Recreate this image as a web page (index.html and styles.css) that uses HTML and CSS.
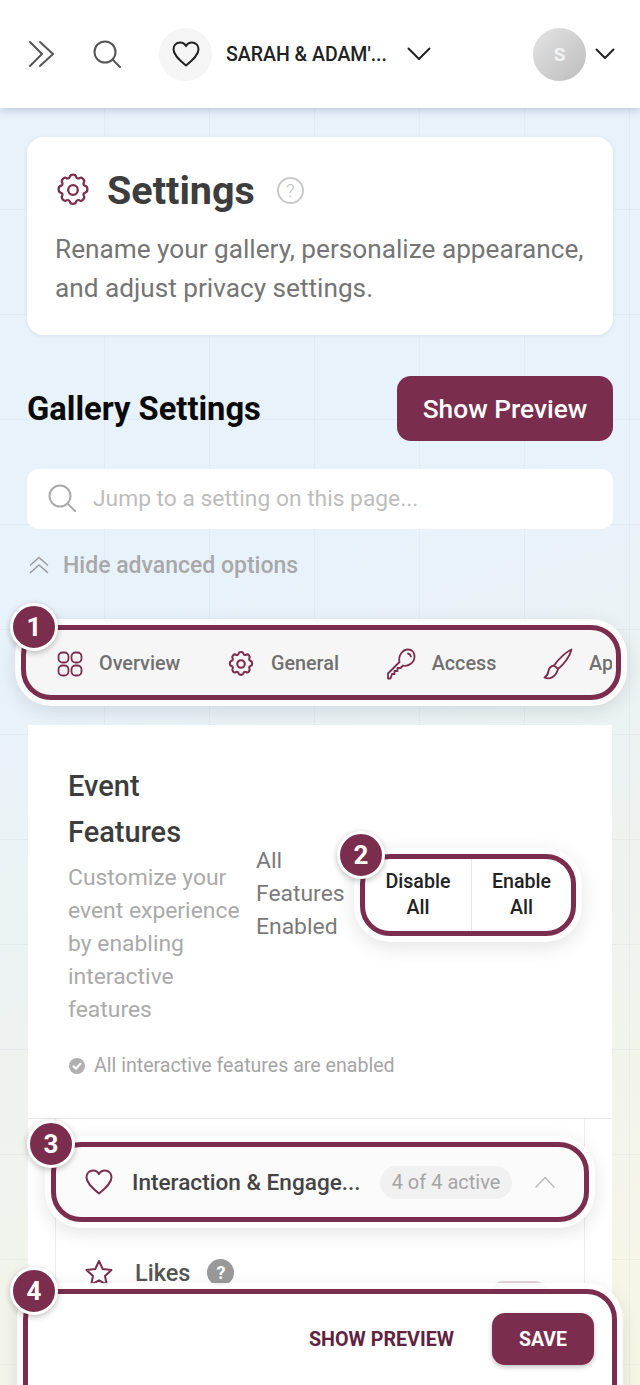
FILE: index.html
```html
<!DOCTYPE html>
<html>
	<head>
		<meta charset="utf-8" />
		<title>Settings</title>
		<link rel="stylesheet" href="styles.css">
	</head>
	<body>
		<header class="topbar">
			<svg class="ico-menu" width="28" height="28" viewBox="0 0 28 28"><path d="M2 2l12 12L2 26M12 2l13 12-13 12" /></svg>
			<svg class="ico-find" width="28" height="28" viewBox="0 0 28 28"><circle cx="12" cy="12" r="10.5" /><path d="M20 20l7 7" /></svg>
			<div class="event-pic">
				<svg width="28" height="26" viewBox="0 0 28 26"><path d="M14 24.5C6 18 1.5 13.5 1.5 8.2 1.5 4.4 4.4 1.5 8 1.5c2.5 0 4.800 1.300 6 3.600 1.200-2.300 3.500-3.600 6-3.600 3.600 0 6.500 2.900 6.500 6.700 0 5.300-4.500 9.800-12.500 16.300z" /></svg>
			</div>
			<div class="event-name">SARAH &amp; ADAM'...</div>
			<svg class="chev" width="24" height="14" viewBox="0 0 24 14"><path d="M1.500 1.500L12 12 22.500 1.500" /></svg>
			<div class="avatar">S</div>
			<svg class="chev-sm" width="20" height="12" viewBox="0 0 20 12"><path d="M1.500 1.500L10 10l8.500-8.500" /></svg>
		</header>

		<main class="page">
			<section class="intro">
				<div class="intro-head">
					<svg class="gear" width="36" height="36" viewBox="0 0 24 24"><path d="M9.900 3.100c.2-.9 1-1.400 2.100-1.400s1.900.5 2.100 1.400c.2 1 1.300 1.500 2.200 1 .8-.5 1.800-.3 2.500.5.700.8.900 1.700.4 2.500-.5.900 0 2 1 2.200.9.200 1.400 1.100 1.400 2.200s-.5 2-1.400 2.200c-1 .2-1.500 1.300-1 2.200.5.800.3 1.700-.4 2.500-.7.800-1.700 1-2.500.5-.9-.5-2-.1-2.200 1-.2.900-1 1.400-2.100 1.400s-1.900-.5-2.100-1.400c-.2-1.100-1.300-1.500-2.200-1-.8.500-1.800.3-2.500-.5-.7-.8-.9-1.700-.4-2.500.5-.9 0-2-1-2.200-.9-.2-1.400-1.100-1.400-2.200s.5-2 1.400-2.200c1-.2 1.500-1.300 1-2.200-.5-.8-.3-1.700.4-2.500.7-.8 1.700-1 2.500-.5.900.5 2 0 2.200-1z" /><circle cx="12" cy="12" r="3.200" /></svg>
					<h1>Settings</h1>
					<span class="help-ring">?</span>
				</div>
				<p>Rename your gallery, personalize appearance, and adjust privacy settings.</p>
			</section>

			<div class="gallery-row">
				<h2>Gallery Settings</h2>
				<button class="btn-preview">Show Preview</button>
			</div>

			<div class="jump">
				<svg width="28" height="28" viewBox="0 0 28 28"><circle cx="12" cy="12" r="10.500" /><path d="M20 20l7 7" /></svg>
				<span>Jump to a setting on this page...</span>
			</div>

			<div class="advanced">
				<svg width="20" height="18" viewBox="0 0 20 18"><path d="M1.500 9L10 1.500 18.500 9M1.500 16.500L10 9l8.500 7.500" /></svg>
				<span>Hide advanced options</span>
			</div>

			<nav class="tabs mark">
				<span class="badge">1</span>
				<div class="tabs-in">
					<a class="tab">
						<svg width="26" height="26" viewBox="0 0 26 26"><rect x="1.500" y="1.500" width="10" height="10" rx="4" /><rect x="14.500" y="1.500" width="10" height="10" rx="4" /><rect x="1.500" y="14.500" width="10" height="10" rx="4" /><rect x="14.500" y="14.500" width="10" height="10" rx="4" /></svg>
						Overview
					</a>
					<a class="tab">
						<svg width="28" height="28" viewBox="0 0 24 24"><path d="M9.900 3.100c.2-.9 1-1.400 2.100-1.400s1.900.5 2.100 1.400c.2 1 1.300 1.500 2.200 1 .8-.5 1.800-.3 2.500.5.700.8.900 1.700.4 2.500-.5.900 0 2 1 2.200.9.200 1.400 1.100 1.400 2.200s-.5 2-1.400 2.200c-1 .2-1.500 1.300-1 2.200.5.800.3 1.700-.4 2.500-.7.800-1.700 1-2.500.5-.9-.5-2-.1-2.200 1-.2.900-1 1.400-2.100 1.400s-1.900-.5-2.100-1.400c-.2-1.100-1.300-1.500-2.200-1-.8.500-1.800.3-2.500-.5-.7-.8-.9-1.700-.4-2.500.5-.9 0-2-1-2.200-.9-.2-1.400-1.100-1.400-2.200s.5-2 1.400-2.200c1-.2 1.500-1.300 1-2.200-.5-.8-.3-1.700.4-2.500.7-.8 1.700-1 2.500-.5.900.5 2 0 2.200-1z" /><circle cx="12" cy="12" r="3.200" /></svg>
						General
					</a>
					<a class="tab">
						<svg width="30" height="32" viewBox="0 0 30 32"><path d="M2 30.500v-5L13.500 14C12 8 16.500 1.500 22 1.500c4 0 6.500 3 6.500 7 0 6-6 10.500-11.500 9l-2.500 2.500h-3v3h-3v3H6l-1.500 4.500H2z" /><path d="M22 5.500c1.500.3 2.700 1.500 3 3" /></svg>
						Access
					</a>
					<a class="tab">
						<svg width="30" height="32" viewBox="0 0 30 32"><path d="M28.500 1.500C24 3.500 15 11 11 17.500l4 3.500C21 16.500 27 8 28.500 1.500zM11 17.500c-3 .5-5 2.500-5.500 5.500-.4 2.500-1.500 5-4 6.500 4.500 2 11 .5 13.500-8.500" /></svg>
						Appearance
					</a>
				</div>
			</nav>

			<section class="features">
				<div class="features-top">
					<div class="features-txt">
						<h3>Event Features</h3>
						<p>Customize your event experience by enabling interactive features</p>
					</div>
					<div class="features-state">All Features Enabled</div>
					<div class="toggle-all mark">
						<span class="badge">2</span>
						<button class="toggle-btn">Disable All</button>
						<button class="toggle-btn">Enable All</button>
					</div>
				</div>
				<div class="features-msg">
					<svg width="16" height="16" viewBox="0 0 16 16"><circle class="dot" cx="8" cy="8" r="8" /><path class="tick" d="M4.500 8.200l2.500 2.500 4.500-5" /></svg>
					All interactive features are enabled
				</div>

				<div class="group">
					<div class="group-head mark">
						<span class="badge">3</span>
						<svg width="28" height="26" viewBox="0 0 28 26"><path d="M14 24.500C6 18 1.500 13.500 1.500 8.200 1.500 4.400 4.400 1.500 8 1.500c2.500 0 4.800 1.300 6 3.600 1.200-2.300 3.500-3.600 6-3.600 3.600 0 6.500 2.900 6.500 6.700 0 5.300-4.500 9.800-12.500 16.300z" /></svg>
						<div class="group-name">Interaction &amp; Engage...</div>
						<div class="group-count">4 of 4 active</div>
						<svg class="group-chev" width="20" height="12" viewBox="0 0 20 12"><path d="M1 11l9-9.500L19 11" /></svg>
					</div>
					<div class="likes">
						<svg width="28" height="28" viewBox="0 0 28 28"><path d="M14 2l3.700 8 8.800 1-6.500 6 1.800 8.700L14 21.300l-7.800 4.400L8 17l-6.500-6 8.800-1z" /></svg>
						<span class="likes-name">Likes</span>
						<span class="help-dot">?</span>
						<span class="pill"></span>
					</div>
				</div>
			</section>
		</main>

		<footer class="savebar mark">
			<span class="badge">4</span>
			<button class="link-preview">SHOW PREVIEW</button>
			<button class="btn-save">SAVE</button>
		</footer>
	</body>
</html>
```

FILE: styles.css
```css
*{
	margin:0px;
	padding:0px;
	box-sizing: border-box;
}
html, body{
	height: 1385px;
	overflow: hidden;
}
body{
	position: relative;
	font-family: Roboto, "Liberation Sans", sans-serif;
	color: #3d3d3d;
	background-color: #e8f1f8;
	background-image:
		linear-gradient(to right, transparent 104px, rgba(120,140,160,.07) 104px, rgba(120,140,160,.07) 105px),
		linear-gradient(to bottom, transparent 104px, rgba(120,140,160,.07) 104px, rgba(120,140,160,.07) 105px),
		linear-gradient(160deg, #e7f2fb 0%, #e8f2fb 40%, #eef3f0 66%, #f8f6e6 100%);
	background-size: 105px 105px, 105px 105px, 100% 100%;
}
svg{
	fill: none;
	stroke-width: 2;
	stroke-linecap: round;
	stroke-linejoin: round;
	flex: none;
}
button{
	border: none;
	background: none;
	font-family: inherit;
}

/* top bar */
.topbar{
	height: 108px;
	background: #fff;
	display: flex;
	align-items: center;
	padding: 0 25px 0 28px;
	box-shadow: 0 2px 8px rgba(60,70,90,.25);
	position: relative;
}
.topbar svg{
	stroke: #222;
}
.topbar .ico-menu, .topbar .ico-find{
	stroke: #555;
}
.ico-find{
	margin-left: 37px;
}
.event-pic{
	width: 53px;
	height: 53px;
	border-radius: 50%;
	background: #f5f5f5;
	margin-left: 38px;
	display: flex;
	align-items: center;
	justify-content: center;
}
.event-name{
	margin-left: 14px;
	width: 159px;
	font-size: 19.500px;
	font-weight: 500;
	color: #222;
	white-space: nowrap;
}
.chev{
	margin-left: 22px;
}
.avatar{
	margin-left: auto;
	width: 53px;
	height: 53px;
	border-radius: 50%;
	background: linear-gradient(135deg, #e4e4e4, #bdbdbd);
	color: #f3f3f3;
	font-size: 19px;
	font-weight: 700;
	display: flex;
	align-items: center;
	justify-content: center;
}
.chev-sm{
	margin-left: 9px;
}

.page{
	padding: 29px 27px 0;
}

/* intro card */
.intro{
	height: 198px;
	background: #fff;
	border-radius: 16px;
	padding: 28px 20px 28px 28px;
	box-shadow: 0 1px 4px rgba(80,100,120,.12);
}
.intro-head{
	display: flex;
	align-items: center;
	height: 50px;
}
.gear{
	stroke: #7b2d4e;
	stroke-width: 1.500;
}
h1{
	font-size: 39.500px;
	font-weight: 700;
	color: #3d3d3d;
	margin-left: 16px;
}
.help-ring{
	width: 27px;
	height: 27px;
	border-radius: 50%;
	border: 2px solid #c8c8c8;
	color: #bbb;
	font-size: 18px;
	font-weight: 300;
	margin-left: 22px;
	display: flex;
	align-items: center;
	justify-content: center;
}
.intro p{
	margin-top: 15px;
	font-size: 26.200px;
	line-height: 39px;
	color: #757575;
}

/* gallery row */
.gallery-row{
	margin-top: 41px;
	display: flex;
	align-items: center;
	justify-content: space-between;
}
h2{
	font-size: 32.700px;
	font-weight: 700;
	color: #0a0a0a;
}
.btn-preview{
	width: 216px;
	height: 65px;
	border-radius: 14px;
	background: #7b2d4e;
	color: #fff;
	font-size: 26.300px;
	font-weight: 500;
}

.jump{
	margin-top: 28px;
	height: 60px;
	background: #fff;
	border-radius: 12px;
	display: flex;
	align-items: center;
	padding: 0 0 2px 21px;
	gap: 17px;
	font-size: 22.800px;
	color: #bdbdbd;
}
.jump svg{
	stroke: #aaa;
}
.advanced{
	margin-top: 21px;
	height: 30px;
	display: flex;
	align-items: center;
	gap: 14px;
	padding-left: 2px;
	font-size: 23px;
	font-weight: 500;
	color: #a8a8a8;
}
.advanced svg{
	stroke: #999;
	stroke-width: 1.500;
}

/* numbered highlight */
.mark{
	position: relative;
	border: 5px solid #7b2d4e;
	box-shadow: 0 0 0 6px rgba(255,255,255,.88), 0 5px 18px 6px rgba(50,50,60,.13);
}
.badge{
	position: absolute;
	width: 48px;
	height: 48px;
	border-radius: 50%;
	border: 3px solid #fff;
	background: #7b2d4e;
	color: #fff;
	font-size: 26px;
	font-weight: 700;
	display: flex;
	align-items: center;
	justify-content: center;
	box-shadow: 0 2px 6px rgba(0,0,0,.25);
	z-index: 3;
}

/* tabs */
.tabs{
	margin: 45px -8px 0 -6px;
	height: 75px;
	border-radius: 30px;
	background: #f7f6f6;
}
.tabs .badge{
	left: -16px;
	top: -27px;
}
.tabs-in{
	height: 100%;
	overflow: hidden;
	display: flex;
	align-items: center;
	margin-right: 4px;
	padding: 2px 0 0 31px;
	gap: 46.700px;
}
.tab{
	display: flex;
	align-items: center;
	gap: 16px;
	font-size: 19.800px;
	font-weight: 500;
	color: #707070;
	white-space: nowrap;
}
.tab svg{
	stroke: #7b2d4e;
	stroke-width: 1.800;
}

/* event features */
.features{
	margin: 25px 1px 0;
	background: #fff;
	height: 700px;
	padding-top: 38px;
}
.features-top{
	display: flex;
	align-items: center;
	padding: 0 36px 0 40px;
}
.features-txt{
	width: 188px;
	flex: none;
}
h3{
	font-size: 29px;
	font-weight: 500;
	line-height: 46px;
	color: #3d3d3d;
	width: 150px;
}
.features-txt p{
	margin-top: 6px;
	font-size: 22.900px;
	line-height: 33px;
	color: #aaa;
}
.features-state{
	font-size: 22.900px;
	line-height: 33px;
	color: #7a7a7a;
	width: 90px;
	flex: none;
	margin-bottom: 2px;
}
.toggle-all{
	margin-left: 14px;
	width: 216px;
	height: 82px;
	border-radius: 30px;
	background: #fff;
	display: flex;
	flex: none;
}
.toggle-all .badge{
	left: -28px;
	top: -28px;
}
.toggle-btn{
	font-size: 19.600px;
	font-weight: 500;
	line-height: 26px;
	color: #222;
}
.toggle-btn:first-of-type{
	width: 106px;
	padding: 0 16px;
}
.toggle-btn + .toggle-btn{
	flex: 1;
	padding: 0 20px;
	border-left: 1px solid #e6e6e6;
}
.features-msg{
	margin: 28px 0 0 41px;
	display: flex;
	align-items: center;
	gap: 9px;
	font-size: 19.600px;
	color: #a5a5a5;
}
.dot{
	fill: #b0b0b0;
	stroke: none;
}
.tick{
	stroke: #fff;
}

/* interaction group */
.group{
	margin: 41px 27px 0;
	border-top: 1px solid #e8e8e8;
	position: relative;
	border-left: 1px solid #eee;
	border-right: 1px solid #eee;
	height: 300px;
}
.group::before{
	content: "";
	position: absolute;
	top: -1px;
	left: -28px;
	right: -28px;
	border-top: 1px solid #e8e8e8;
}
.group-head{
	margin: 23px -5px 0;
	height: 80px;
	border-radius: 30px;
	background: #fbfbfb;
	display: flex;
	align-items: center;
	padding-left: 29px;
}
.group-head .badge{
	left: -29px;
	top: -27px;
}
.group-head svg{
	stroke: #7b2d4e;
}
.group-name{
	margin-left: 19px;
	width: 248px;
	font-size: 22.600px;
	font-weight: 500;
	color: #444;
	white-space: nowrap;
}
.group-count{
	height: 33px;
	width: 132px;
	border-radius: 17px;
	background: #f1f1f1;
	color: #a5a5a5;
	font-size: 20px;
	display: flex;
	align-items: center;
	justify-content: center;
}
.group-head .group-chev{
	margin-left: 23px;
	stroke: #bbb;
	stroke-width: 1.500;
}
.likes{
	margin-top: 37px;
	padding-left: 29px;
	display: flex;
	align-items: flex-start;
	font-size: 23.500px;
	font-weight: 500;
	color: #555;
}
.likes svg{
	stroke: #7b2d4e;
}
.likes-name{
	margin-left: 22px;
	line-height: 28px;
}
.help-dot{
	width: 27px;
	height: 27px;
	border-radius: 50%;
	background: #999;
	color: #fff;
	font-size: 18px;
	font-weight: 700;
	margin-left: 17px;
	display: flex;
	align-items: center;
	justify-content: center;
}
.pill{
	width: 60px;
	height: 30px;
	border-radius: 15px;
	background: #e4d3da;
	margin: 22px 0 0 255px;
}

/* save bar */
.savebar{
	position: absolute;
	left: 23px;
	right: 23px;
	top: 1289px;
	height: 130px;
	border-radius: 30px;
	background: #fff;
	display: flex;
	justify-content: flex-end;
	align-items: flex-start;
	padding: 19px 18px 0 0;
	z-index: 2;
}
.savebar .badge{
	left: -18px;
	top: -27px;
}
.link-preview{
	height: 52px;
	font-size: 19.700px;
	font-weight: 700;
	color: #5f2340;
}
.btn-save{
	margin-left: 38px;
	width: 102px;
	height: 52px;
	border-radius: 13px;
	background: #7b2d4e;
	color: #fff;
	font-size: 19.500px;
	font-weight: 700;
	box-shadow: 0 2px 5px rgba(0,0,0,.25);
}
```
